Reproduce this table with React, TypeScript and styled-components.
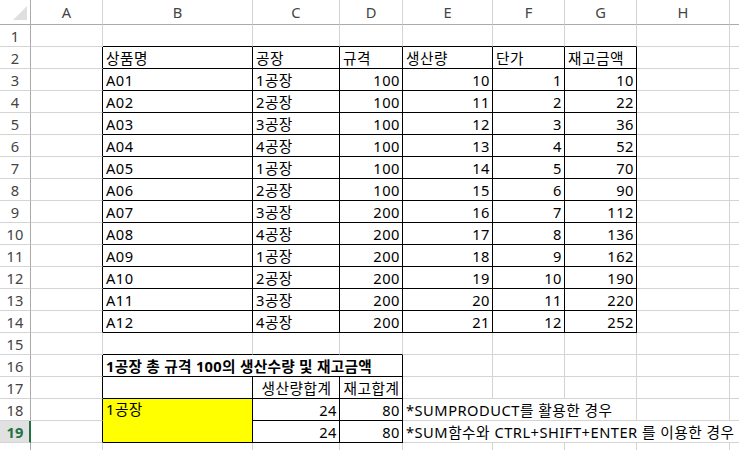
import React from 'react';
import styled, { createGlobalStyle } from 'styled-components';

const Global = createGlobalStyle`
  html, body { margin: 0; padding: 0; background: #fff; overflow: hidden; }
  body { font-family: "Noto Sans", "Noto Sans CJK KR", sans-serif; }
`;

const GRID = '#d4d4d4';
const HEAD_LINE = '#ababab';
const BLACK = '#000';

const COLS = ['A', 'B', 'C', 'D', 'E', 'F', 'G', 'H', ''];
const ROW_COUNT = 20;

const Sheet = styled.div`
  display: grid;
  grid-template-columns: 31px 72px 150px 87px 63px 90px 72px 72px 93px 72px;
  grid-template-rows: 25px repeat(${ROW_COUNT}, 22px);
  width: 739px;
  height: 450px;
  overflow: hidden;
  background: #fff;
`;

const Corner = styled.div`
  grid-row: 1;
  grid-column: 1;
  box-sizing: border-box;
  border-right: 1px solid ${HEAD_LINE};
  border-bottom: 1px solid ${HEAD_LINE};
  display: flex;
  align-items: flex-end;
  justify-content: flex-end;
  padding: 0 3px 4px 0;
`;

const ColHeader = styled.div<{ $col: number }>`
  grid-row: 1;
  grid-column: ${p => p.$col};
  box-sizing: border-box;
  border-right: 1px solid ${GRID};
  border-bottom: 1px solid ${HEAD_LINE};
  display: flex;
  align-items: center;
  justify-content: center;
  font-size: 14.67px;
  color: #444;
  padding-bottom: 1px;
`;

const RowHeader = styled.div<{ $row: number; $sel?: boolean }>`
  grid-row: ${p => p.$row};
  grid-column: 1;
  box-sizing: border-box;
  border-right: ${p => (p.$sel ? `2px solid #217346` : `1px solid ${HEAD_LINE}`)};
  border-bottom: 1px solid ${GRID};
  background: ${p => (p.$sel ? '#e1e1e1' : '#fff')};
  display: flex;
  align-items: center;
  justify-content: center;
  font-size: 14.67px;
  font-weight: ${p => (p.$sel ? 700 : 400)};
  color: ${p => (p.$sel ? '#217346' : '#444')};
  padding-left: ${p => (p.$sel ? '1px' : '0')};
`;

type Align = 'left' | 'right' | 'center';

const Cell = styled.div<{
  $row: number;
  $col: number;
  $cspan: number;
  $rspan: number;
  $right: string;
  $bottom: string;
  $align: Align;
  $top?: boolean;
  $bold?: boolean;
  $bg?: string;
}>`
  grid-row: ${p => p.$row} / span ${p => p.$rspan};
  grid-column: ${p => p.$col} / span ${p => p.$cspan};
  box-sizing: border-box;
  border-right: 1px solid ${p => p.$right};
  border-bottom: 1px solid ${p => p.$bottom};
  background: ${p => p.$bg || 'transparent'};
  display: flex;
  align-items: ${p => (p.$top ? 'flex-start' : 'flex-end')};
  justify-content: ${p => (p.$align === 'left' ? 'flex-start' : p.$align === 'right' ? 'flex-end' : 'center')};
  padding: 0 2px 0 3px;
  font-size: 14.67px;
  line-height: 20px;
  letter-spacing: ${p => (p.$bold ? '0.3px' : '0.5px')};
  font-weight: ${p => (p.$bold ? 700 : 400)};
  color: #000;
  white-space: nowrap;
  overflow: hidden;
`;

type CellDef = {
  r: number;
  c: number;
  text?: string;
  align?: Align;
  cspan?: number;
  rspan?: number;
  bold?: boolean;
  bg?: string;
  top?: boolean;
};

const products = Array.from({ length: 12 }, (_, i) => {
  const prod = 10 + i;
  const price = i + 1;
  return {
    name: `A${String(i + 1).padStart(2, '0')}`,
    factory: `${(i % 4) + 1}공장`,
    spec: i < 6 ? 100 : 200,
    prod,
    price,
    stock: prod * price,
  };
});

const defs: CellDef[] = [
  { r: 2, c: 1, text: '상품명' },
  { r: 2, c: 2, text: '공장' },
  { r: 2, c: 3, text: '규격' },
  { r: 2, c: 4, text: '생산량' },
  { r: 2, c: 5, text: '단가' },
  { r: 2, c: 6, text: '재고금액' },
  ...products.flatMap((p, i) => {
    const r = 3 + i;
    return [
      { r, c: 1, text: p.name },
      { r, c: 2, text: p.factory },
      { r, c: 3, text: String(p.spec), align: 'right' as Align },
      { r, c: 4, text: String(p.prod), align: 'right' as Align },
      { r, c: 5, text: String(p.price), align: 'right' as Align },
      { r, c: 6, text: String(p.stock), align: 'right' as Align },
    ];
  }),
  { r: 16, c: 1, cspan: 3, text: '1공장 총 규격 100의 생산수량 및 재고금액', bold: true },
  { r: 17, c: 1 },
  { r: 17, c: 2, text: '생산량합계', align: 'center' },
  { r: 17, c: 3, text: '재고합계', align: 'center' },
  { r: 18, c: 1, rspan: 2, text: '1공장', bg: '#ffff00', top: true },
  { r: 18, c: 2, text: '24', align: 'right' },
  { r: 18, c: 3, text: '80', align: 'right' },
  { r: 18, c: 4, cspan: 3, text: '*SUMPRODUCT를 활용한 경우' },
  { r: 19, c: 2, text: '24', align: 'right' },
  { r: 19, c: 3, text: '80', align: 'right' },
  { r: 19, c: 4, cspan: 5, text: '*SUM함수와 CTRL+SHIFT+ENTER 를 이용한 경우' },
];

const bordered = (r: number, c: number) =>
  (r >= 2 && r <= 14 && c >= 1 && c <= 6) || (r >= 16 && r <= 19 && c >= 1 && c <= 3);

const occupied = new Set<string>();
defs.forEach(d => {
  for (let rr = d.r; rr < d.r + (d.rspan || 1); rr++)
    for (let cc = d.c; cc < d.c + (d.cspan || 1); cc++) occupied.add(`${rr}-${cc}`);
});
const allCells: CellDef[] = [...defs];
for (let r = 1; r <= ROW_COUNT; r++) {
  for (let c = 0; c < COLS.length; c++) {
    if (!occupied.has(`${r}-${c}`)) allCells.push({ r, c });
  }
}

const CornerMark = () => (
  <svg width="14" height="14" viewBox="0 0 14 14">
    <polygon points="14,0 14,14 0,14" fill="#dfdfdf" />
  </svg>
);

export default function App() {
  return (
    <>
      <Global />
      <Sheet>
        <Corner>
          <CornerMark />
        </Corner>
        {COLS.map((l, i) => (
          <ColHeader key={i} $col={i + 2}>
            {l}
          </ColHeader>
        ))}
        {Array.from({ length: ROW_COUNT }, (_, i) => (
          <RowHeader key={i} $row={i + 2} $sel={i + 1 === 19}>
            {i + 1 < ROW_COUNT ? i + 1 : ''}
          </RowHeader>
        ))}
        {allCells.map(d => {
          const lastC = d.c + (d.cspan || 1) - 1;
          const lastR = d.r + (d.rspan || 1) - 1;
          const right = bordered(d.r, lastC) || bordered(d.r, lastC + 1) ? BLACK : GRID;
          const bottom = bordered(lastR, d.c) || bordered(lastR + 1, d.c) ? BLACK : GRID;
          return (
            <Cell
              key={`${d.r}-${d.c}`}
              $row={d.r + 1}
              $col={d.c + 2}
              $cspan={d.cspan || 1}
              $rspan={d.rspan || 1}
              $right={right}
              $bottom={bottom}
              $align={d.align || 'left'}
              $bold={d.bold}
              $bg={d.bg}
              $top={d.top}
            >
              {d.text}
            </Cell>
          );
        })}
      </Sheet>
    </>
  );
}
